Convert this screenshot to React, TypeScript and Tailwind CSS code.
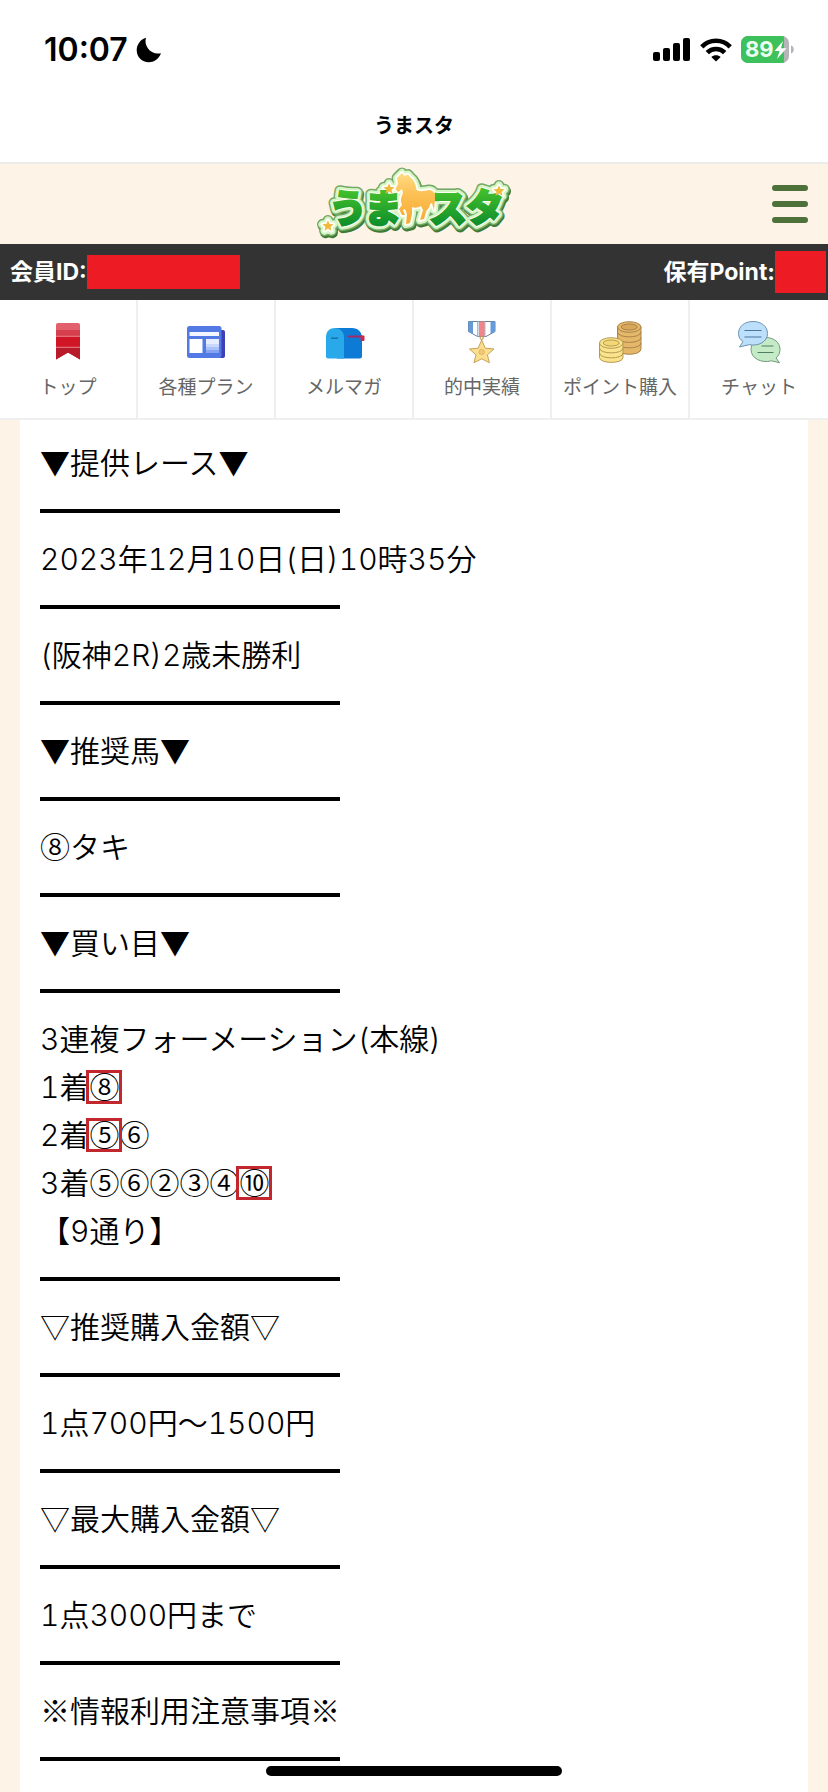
import type { ReactNode } from "react";

const CJK = "font-['Inter','Noto_Sans_CJK_JP',sans-serif]";

function StatusBar() {
  return (
    <div className="flex h-[100px] items-center justify-between pl-[44px] pr-[33px]">
      <div className="flex items-center gap-2">
        <span className="text-[32px] leading-10 font-semibold">10:07</span>
        <svg viewBox="0 0 26 26" className="size-[26px]" aria-label="Do not disturb">
          <path d="M10 .8C7.5 8.5 14.500 18.500 25 16.300C22.500 22.500 18 25.200 12.800 25.200C6 25.200.7 20 .7 13.300C.7 7.500 4.600 2.300 10 .8Z" fill="#000" />
        </svg>
      </div>
      <div className="flex items-center gap-[9px]">
        <svg viewBox="0 0 38 24" className="h-6 w-[38px]" aria-label="Signal">
          <rect x="0" y="14" width="7" height="9" rx="2" />
          <rect x="10" y="10" width="7" height="13" rx="2" />
          <rect x="20" y="5" width="7" height="18" rx="2" />
          <rect x="30" y="0" width="7" height="23" rx="2" />
        </svg>
        <svg viewBox="0 0 32 24" className="h-6 w-8" aria-label="Wi-Fi" fill="none" stroke="#000" strokeWidth="4.600">
          <path d="M1.800 8.800C9.500 .8 22.500 .8 30.200 8.800" />
          <path d="M7.300 14.700C12 9.700 20 9.700 24.700 14.700" />
          <path d="M16 23.500L11.300 18.900C13.800 16.600 18.200 16.600 20.700 18.900Z" fill="#000" stroke="none" />
        </svg>
        <svg viewBox="0 0 54 28" className="h-7 w-[54px]" aria-label="Battery 89%">
          <defs>
            <clipPath id="cell"><rect x="0" y="0" width="48" height="27" rx="7" /></clipPath>
          </defs>
          <g clipPath="url(#cell)">
            <rect width="48" height="27" fill="#b5b5b8" />
            <rect width="43" height="27" fill="#3dc15c" />
          </g>
          <path d="M50 9.500C53.700 10.500 53.700 16.500 50 17.500Z" fill="#b5b5b8" />
          <text x="4" y="21" fontSize="22" fontWeight="700" fill="#eafff0" className="font-['Inter',sans-serif]">89</text>
          <path d="M42 5L33.500 15H38.500L36 23L45.500 12.300H40Z" fill="#fff" />
        </svg>
      </div>
    </div>
  );
}

const STAR = "M0 -5.500L1.600 -1.900L5.500 -1.700L2.500 .9L3.500 4.700L0 2.600L-3.500 4.700L-2.500 .9L-5.500 -1.700L-1.600 -1.900Z";

function Logo() {
  return (
    <svg viewBox="-1 8 230 80" className="h-20 w-[230px]" role="img" aria-label="うまスタ">
      <defs>
        <linearGradient id="grass" x1="0" y1="0" x2="0" y2="1">
          <stop offset="0.200" stopColor="#45c22c" />
          <stop offset="0.950" stopColor="#07872c" />
        </linearGradient>
        <linearGradient id="coat" x1="0" y1="0" x2="0" y2="1">
          <stop offset="0" stopColor="#ffdc85" />
          <stop offset="0.400" stopColor="#fcc155" />
          <stop offset="1" stopColor="#f9a832" />
        </linearGradient>
        <g id="letters" fontSize="38" fontWeight="900" className="font-['Noto_Sans_CJK_JP',sans-serif]">
          <text x="29" y="66">う</text>
          <text x="64" y="66">ま</text>
          <text x="129" y="66">ス</text>
          <text x="166" y="65">タ</text>
        </g>
        <path id="horse" d="M102 17L104.500 20L108 18.500L110 21C114 24 116 29 116.500 34C120 36 124 35 129 34C133 34 135 37 135 42L134 54L132 47L130 48C130 52 127 53 126 56L124 63L120 64L123 54L121 50C118 52 114 52 112 51L112 58L110 67L106 68L107 58L105 53L103 54L105 59L102 59L99 53L102 49C100 45 101 41 103 37L102 33L98 36L95.500 33L98 28L97 22Z" />
        <g id="stars">
          <path d={STAR} transform="translate(89 33)" />
          <path d={STAR} transform="translate(199 35)" />
          <path d={STAR} transform="translate(28 70)" />
        </g>
        <g id="mark">
          <use href="#letters" />
          <use href="#horse" />
          <use href="#stars" />
        </g>
      </defs>
      <use href="#mark" y="2" x="1" fill="#3f7a35" stroke="#3f7a35" strokeWidth="11" strokeLinejoin="round" />
      <use href="#mark" fill="#75a868" stroke="#75a868" strokeWidth="11" strokeLinejoin="round" />
      <use href="#mark" fill="#d3f5c3" stroke="#d3f5c3" strokeWidth="8" strokeLinejoin="round" />
      <use href="#mark" fill="#fffef4" stroke="#fffef4" strokeWidth="4" strokeLinejoin="round" />
      <use href="#letters" fill="url(#grass)" stroke="url(#grass)" strokeWidth="2" />
      <use href="#horse" fill="url(#coat)" />
      <use href="#stars" fill="#f0b93a" />
    </svg>
  );
}

function Header() {
  return (
    <header className="flex h-[82px] items-center border-t-2 border-[#ececea] bg-[#fdf4e7] pr-5 pl-5">
      <div className="flex-1" />
      <a href="#home"><Logo /></a>
      <div className="flex flex-1 justify-end">
        <button aria-label="メニュー" className="flex w-9 flex-col gap-[10px]">
          <span className="h-[6px] rounded-full bg-[#4d7138]" />
          <span className="h-[6px] rounded-full bg-[#4d7138]" />
          <span className="h-[6px] rounded-full bg-[#4d7138]" />
        </button>
      </div>
    </header>
  );
}

function MemberBar() {
  return (
    <div className="flex h-14 items-center justify-between bg-[#333] pr-[2px] pl-[10px] text-[23px] leading-8 font-bold text-white">
      <div className="flex items-center">
        <span>会員ID:</span>
        <span className="h-[34px] w-[153px] bg-[#ed1c24]" />
      </div>
      <div className="flex items-center">
        <span>保有Point:</span>
        <span className="h-[42px] w-[51px] bg-[#ed1c24]" />
      </div>
    </div>
  );
}

function BookmarkIcon() {
  return (
    <>
      <path d="M10 5a2 2 0 0 1 2-2h20a2 2 0 0 1 2 2v5H10Z" fill="#e2606c" />
      <path d="M10 10h24v6H10Z" fill="#d63f4d" />
      <path d="M10 16h24v23.500L22 32.500L10 39.500Z" fill="#cf1526" />
      <path d="M10 27.500h24v12L22 32.500L10 39.500Z" fill="#b91a29" />
      <path d="M10 16.300h24M10 27.300h24" stroke="#f3a0a5" strokeWidth="0.800" />
    </>
  );
}

function PlanIcon() {
  return (
    <>
      <rect x="9" y="10" width="32" height="28" rx="2" fill="#3d3fb5" />
      <rect x="3" y="6" width="34.500" height="32" rx="2.500" fill="#5379e4" />
      <rect x="5.500" y="12" width="29.500" height="4" fill="#f3f6ff" />
      <rect x="5.500" y="19" width="13" height="14" fill="#fff" />
      <rect x="22" y="19" width="13" height="14" fill="#e6edff" />
      <path d="M22 24h13v3H22Z" fill="#c9d8ff" />
      <path d="M22 27h13v3H22Z" fill="#a9c0fb" />
      <path d="M22 30h13v3H22Z" fill="#86a4f3" />
    </>
  );
}

function MailboxIcon() {
  return (
    <>
      <path d="M13 8h17c6 0 10 4 10 10v18a2.500 2.500 0 0 1-2.500 2.500H15Z" fill="#0d7bd6" />
      <path d="M4 17C4 11 8 8 13 8s9 4 9 9v21.500H6A2 2 0 0 1 4 36.500Z" fill="#29a9ea" />
      <path d="M9 18.200h7" stroke="#11679f" strokeWidth="1.200" />
      <path d="M27 16.500h13" stroke="#a32a66" strokeWidth="2.200" strokeLinecap="round" />
      <rect x="38.500" y="15.500" width="4" height="5.500" rx="1" fill="#c92c4b" />
    </>
  );
}

function MedalIcon() {
  return (
    <>
      <path d="M8.500 1.500h26.500v10L26 16.500h-8.500L8.500 11.500Z" fill="#fff" stroke="#55708c" strokeWidth="0.900" />
      <path d="M8.500 1.500h4.500v12.500L8.500 11.500ZM35 1.500h-4.500v12.500L35 11.500Z" fill="#659bd8" />
      <path d="M17 1.500h1.500v15H17ZM25.500 1.500h-1.500v15h1.500Z" fill="#a8bcd0" />
      <path d="M19 1.500h5.500v15H19Z" fill="#f0868a" />
      <circle cx="21.700" cy="18" r="1.600" fill="#fff3c5" stroke="#c2935a" />
      <path d="M21.700 20L25.200 28.200L34 29L27.400 34.800L29.400 42.700L21.700 38.800L14 42.700L16 34.800L9.400 29L18.200 28.200Z" fill="#fbdf8c" stroke="#c5a05b" strokeWidth="1" strokeLinejoin="round" />
      <circle cx="21.700" cy="32" r="2.700" fill="#f1c875" stroke="#ddb263" strokeWidth="0.800" />
    </>
  );
}

function CoinsIcon() {
  return (
    <>
      <g stroke="#a9834c" strokeWidth="1" fill="#e5b869">
        <path d="M19.500 7v22c0 7 23.500 7 23.500 0V7Z" />
        <path d="M19.500 12c0 6.500 23.500 6.500 23.500 0M19.500 17.500c0 6.500 23.500 6.500 23.500 0M19.500 23c0 6.500 23.500 6.500 23.500 0" fill="none" />
        <ellipse cx="31.250" cy="7" rx="11.750" ry="5.300" />
        <ellipse cx="31.250" cy="7" rx="8" ry="3" fill="#d9a75a" />
      </g>
      <g stroke="#b79a50" strokeWidth="1" fill="#fae38d">
        <path d="M1.500 23v14.500c0 6.500 23.500 6.500 23.500 0V23Z" />
        <path d="M1.500 28c0 6.500 23.500 6.500 23.500 0M1.500 33c0 6.500 23.500 6.500 23.500 0" fill="none" />
        <ellipse cx="13.250" cy="23" rx="11.750" ry="5.300" />
        <ellipse cx="13.250" cy="23" rx="8" ry="3" fill="#f3d878" />
      </g>
    </>
  );
}

function ChatIcon() {
  return (
    <>
      <path d="M28.500 17.500C37 17.500 43 22.500 43 29.500C43 33 41.500 36 39 38L42.500 42.700L34.500 40.800C24.500 43.500 14 38.500 14 29.500C14 22.500 20 17.500 28.500 17.500Z" fill="#c5ebc6" stroke="#719c7c" strokeWidth="1" />
      <path d="M16 1.500C24.500 1.500 30.500 6.500 30.500 13.500C30.500 21.500 22 26.500 12 24.700L2.500 27L6 21.500C3 19.500 1.500 17 1.500 13.500C1.500 6.500 7.500 1.500 16 1.500Z" fill="#bcdffb" stroke="#6f93b2" strokeWidth="1" />
      <path d="M7.500 10.500h17M7.500 17h17" stroke="#4a779e" strokeWidth="1.200" />
      <path d="M24.500 26h12M20.500 32.500h16" stroke="#4f8062" strokeWidth="1.200" />
    </>
  );
}

const NAV: { label: string; icon: ReactNode }[] = [
  { label: "トップ", icon: <BookmarkIcon /> },
  { label: "各種プラン", icon: <PlanIcon /> },
  { label: "メルマガ", icon: <MailboxIcon /> },
  { label: "的中実績", icon: <MedalIcon /> },
  { label: "ポイント購入", icon: <CoinsIcon /> },
  { label: "チャット", icon: <ChatIcon /> },
];

function Nav() {
  return (
    <nav className="grid grid-cols-6 border-b-2 border-[#efefef] bg-white">
      {NAV.map(({ label, icon }) => (
        <a
          key={label}
          href="#nav"
          className="flex h-[118px] flex-col items-center gap-[10px] border-r-2 border-[#efefef] pt-5 last:border-r-0"
        >
          <svg viewBox="0 0 44 44" className="size-11 shrink-0" fill="none" aria-hidden="true">{icon}</svg>
          <span className="text-[19px] leading-7 whitespace-nowrap text-[#666]">{label}</span>
        </a>
      ))}
    </nav>
  );
}

function Hit({ children }: { children: ReactNode }) {
  return (
    <span className="relative inline-block">
      {children}
      <span className="absolute -inset-x-[3px] top-[9px] h-[34px] border-[3px] border-[#c1272d]" />
    </span>
  );
}

/* Digits and Latin letters take the wider face, everything else the Japanese one. */
function Mixed({ text }: { text: string }) {
  return (
    <>
      {text.split(/([0-9A-Z()]+)/).map((part, i) =>
        i % 2 ? (
          <span key={i} className="font-['Inter',sans-serif] tabular-nums">{part}</span>
        ) : (
          part
        ),
      )}
    </>
  );
}

function Line({ children }: { children: ReactNode }) {
  return <p className="h-12 whitespace-nowrap">{children}</p>;
}

function Rule() {
  return <hr className="mt-6 mb-5 h-1 w-[300px] border-0 bg-black" />;
}

export default function App() {
  return (
    <div className={`min-h-screen bg-[#fdf4e7] text-black ${CJK}`}>
      <div className="bg-white">
        <StatusBar />
        <h1 className="h-[62px] pt-[11px] text-center text-[20px] leading-[30px] font-bold">うまスタ</h1>
      </div>
      <Header />
      <MemberBar />
      <Nav />
      <main className="mx-5 flow-root bg-white px-5 pt-[17px] pb-3 font-['Noto_Sans_CJK_JP',sans-serif] text-[30px] leading-[48px] font-[350] text-black">
        <Line>▼提供レース▼</Line>
        <Rule />
        <Line><Mixed text="2023年12月10日(日)10時35分" /></Line>
        <Rule />
        <Line><Mixed text="(阪神2R)2歳未勝利" /></Line>
        <Rule />
        <Line>▼推奨馬▼</Line>
        <Rule />
        <Line>⑧タキ</Line>
        <Rule />
        <Line>▼買い目▼</Line>
        <Rule />
        <Line><Mixed text="3連複フォーメーション(本線)" /></Line>
        <Line><Mixed text="1着" /><Hit>⑧</Hit></Line>
        <Line><Mixed text="2着" /><Hit>⑤</Hit>⑥</Line>
        <Line><Mixed text="3着" />⑤⑥②③④<Hit>⑩</Hit></Line>
        <Line><Mixed text="【9通り】" /></Line>
        <Rule />
        <Line>▽推奨購入金額▽</Line>
        <Rule />
        <Line><Mixed text="1点700円〜1500円" /></Line>
        <Rule />
        <Line>▽最大購入金額▽</Line>
        <Rule />
        <Line><Mixed text="1点3000円まで" /></Line>
        <Rule />
        <Line>※情報利用注意事項※</Line>
        <Rule />
      </main>
      <div className="fixed bottom-4 left-1/2 h-[10px] w-[296px] -translate-x-1/2 rounded-full bg-black" />
    </div>
  );
}
